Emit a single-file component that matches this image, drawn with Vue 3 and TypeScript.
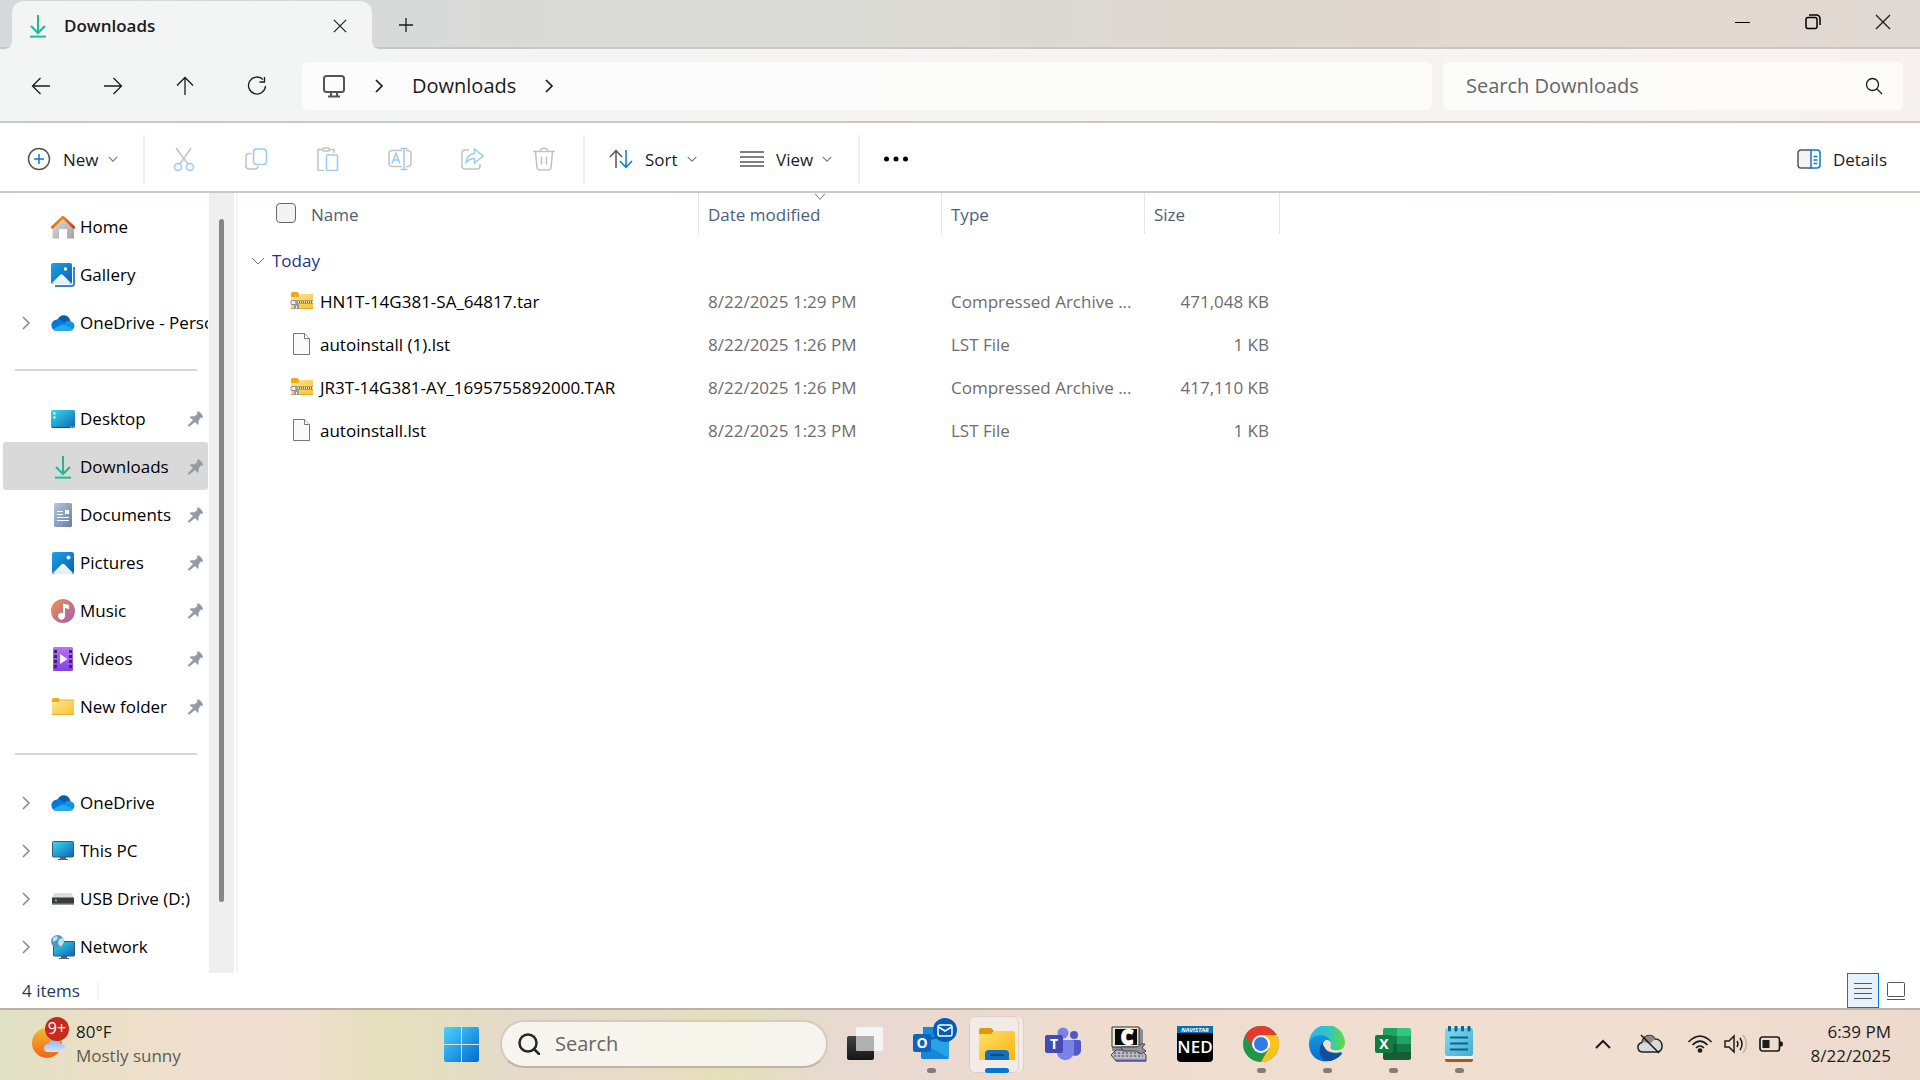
<script setup lang="ts">
import { ref } from 'vue'

interface Place {
  label: string
  icon: string
  expandable?: boolean
  pinned?: boolean
  active?: boolean
}

interface FileRow {
  name: string
  icon: string
  modified: string
  type: string
  size: string
}

const placeGroups: Place[][] = [
  [
    { label: 'Home', icon: 'home' },
    { label: 'Gallery', icon: 'gallery' },
    { label: 'OneDrive - Personal', icon: 'onedrive', expandable: true },
  ],
  [
    { label: 'Desktop', icon: 'desktop', pinned: true },
    { label: 'Downloads', icon: 'download', pinned: true, active: true },
    { label: 'Documents', icon: 'documents', pinned: true },
    { label: 'Pictures', icon: 'pictures', pinned: true },
    { label: 'Music', icon: 'music', pinned: true },
    { label: 'Videos', icon: 'videos', pinned: true },
    { label: 'New folder', icon: 'folder', pinned: true },
  ],
  [
    { label: 'OneDrive', icon: 'onedrive', expandable: true },
    { label: 'This PC', icon: 'pc', expandable: true },
    { label: 'USB Drive (D:)', icon: 'drive', expandable: true },
    { label: 'Network', icon: 'network', expandable: true },
  ],
]

const files: FileRow[] = [
  { name: 'HN1T-14G381-SA_64817.tar', icon: 'archive', modified: '8/22/2025 1:29 PM', type: 'Compressed Archive ...', size: '471,048 KB' },
  { name: 'autoinstall (1).lst', icon: 'file', modified: '8/22/2025 1:26 PM', type: 'LST File', size: '1 KB' },
  { name: 'JR3T-14G381-AY_1695755892000.TAR', icon: 'archive', modified: '8/22/2025 1:26 PM', type: 'Compressed Archive ...', size: '417,110 KB' },
  { name: 'autoinstall.lst', icon: 'file', modified: '8/22/2025 1:23 PM', type: 'LST File', size: '1 KB' },
]

const navButtons = [
  { label: 'Back', icon: 'back' },
  { label: 'Forward', icon: 'forward' },
  { label: 'Up', icon: 'up' },
  { label: 'Refresh', icon: 'refresh' },
]

const editButtons = [
  { label: 'Cut', icon: 'cut' },
  { label: 'Copy', icon: 'copy' },
  { label: 'Paste', icon: 'paste' },
  { label: 'Rename', icon: 'rename' },
  { label: 'Share', icon: 'share' },
  { label: 'Delete', icon: 'trash' },
]

const folderQuery = ref('')
const taskbarQuery = ref('')
const allSelected = ref(false)
</script>

<template>
  <div class="screen">
    <svg class="sprite" width="0" height="0" aria-hidden="true">
      <defs>
        <linearGradient id="g-green" x1="0" y1="0" x2="0" y2="1"><stop offset="0" stop-color="#40d48c" /><stop offset="1" stop-color="#0ca59b" /></linearGradient>
        <linearGradient id="g-roof" x1="0" y1="0" x2="1" y2="1"><stop offset="0" stop-color="#f9a11b" /><stop offset="1" stop-color="#c9380c" /></linearGradient>
        <linearGradient id="g-wall" x1="0" y1="0" x2="1" y2="1"><stop offset="0" stop-color="#dcdcdc" /><stop offset="1" stop-color="#a3a3a3" /></linearGradient>
        <linearGradient id="g-blue" x1="0" y1="0" x2="1" y2="1"><stop offset="0" stop-color="#1ea2e8" /><stop offset="1" stop-color="#0560b4" /></linearGradient>
        <linearGradient id="g-teal" x1="0" y1="0" x2="1" y2="1"><stop offset="0" stop-color="#3bdde6" /><stop offset="1" stop-color="#0a63bd" /></linearGradient>
        <linearGradient id="g-snow" x1="0" y1="0" x2="0" y2="1"><stop offset="0" stop-color="#ffffff" /><stop offset="1" stop-color="#dcecfb" /></linearGradient>
        <linearGradient id="g-doc" x1="0" y1="0" x2="1" y2="1"><stop offset="0" stop-color="#b5c7dc" /><stop offset="1" stop-color="#6080a5" /></linearGradient>
        <linearGradient id="g-music" x1="0" y1="0" x2="1" y2="1"><stop offset="0" stop-color="#f49147" /><stop offset="1" stop-color="#a05fb8" /></linearGradient>
        <linearGradient id="g-video" x1="0" y1="0" x2="0" y2="1"><stop offset="0" stop-color="#b574f2" /><stop offset="1" stop-color="#8242e0" /></linearGradient>
        <linearGradient id="g-folder" x1="0" y1="0" x2="1" y2="1"><stop offset="0" stop-color="#ffe69a" /><stop offset="1" stop-color="#fbc22b" /></linearGradient>
        <linearGradient id="g-start" gradientUnits="userSpaceOnUse" x1="0" y1="0" x2="35" y2="35"><stop offset="0" stop-color="#4fd4ff" /><stop offset="1" stop-color="#006fd0" /></linearGradient>
        <linearGradient id="g-sun" x1="0" y1="0" x2="0" y2="1"><stop offset="0" stop-color="#f2ba34" /><stop offset="1" stop-color="#f26513" /></linearGradient>
        <linearGradient id="g-cloud" x1="0" y1="0" x2="0" y2="1"><stop offset="0" stop-color="#8eb4f2" /><stop offset="1" stop-color="#d8e2fa" /></linearGradient>
        <linearGradient id="g-dark" x1="0" y1="0" x2="0" y2="1"><stop offset="0" stop-color="#434343" /><stop offset="1" stop-color="#151515" /></linearGradient>
        <linearGradient id="g-explorer" x1="0" y1="0" x2="1" y2="1"><stop offset="0" stop-color="#ffe06a" /><stop offset="1" stop-color="#f9b50c" /></linearGradient>
        <linearGradient id="g-edge" x1="0" y1="0" x2="1" y2="0"><stop offset="0" stop-color="#2fb2f0" /><stop offset="0.5" stop-color="#2dc4cc" /><stop offset="1" stop-color="#63dc3c" /></linearGradient>
        <linearGradient id="g-edge-blue" x1="0" y1="0" x2="0" y2="1"><stop offset="0" stop-color="#1795e0" /><stop offset="1" stop-color="#0a6ec8" /></linearGradient>
        <linearGradient id="g-note" x1="0" y1="0" x2="1" y2="1"><stop offset="0" stop-color="#7fdaf3" /><stop offset="1" stop-color="#42acd0" /></linearGradient>
      </defs>

      <symbol id="download" viewBox="0 0 24 24">
        <path d="M12 1v17M5 12l7 7 7-7" fill="none" stroke="#1cb994" stroke-width="2" />
        <rect x="4" y="21.500" width="16" height="2" fill="url(#g-green)" />
      </symbol>
      <symbol id="home" viewBox="0 0 24 24">
        <path d="M12 3 1.500 13v9.500a1 1 0 0 0 1 1H8V14h8v9.500h6a1 1 0 0 0 1-1V13z" fill="url(#g-wall)" />
        <path d="M1 12.500 12 2l11 10.500" fill="none" stroke="url(#g-roof)" stroke-width="2.500" stroke-linecap="round" stroke-linejoin="round" />
      </symbol>
      <symbol id="gallery" viewBox="0 0 24 24">
        <path d="M23 4v16.500a2.500 2.500 0 0 1-2.500 2.500H4" fill="none" stroke="#3c84cf" stroke-width="2" />
        <rect width="21" height="21" rx="2" fill="url(#g-blue)" />
        <path d="M1 20 9 12q1.500-1.500 3 0l8 8q-1 1-2 1H3q-1 0-2-1" fill="url(#g-snow)" />
        <circle cx="14.500" cy="6" r="1.700" fill="#fff" />
      </symbol>
      <symbol id="onedrive" viewBox="0 0 24 24">
        <path d="M6 10C8 3 17 2 19.500 10l-8 4z" fill="#0a5cb2" />
        <path d="M6 8.500c4-1 7 3 9 4.500l-9 6.500H5C-1.500 19 -1 9 6 8.500" fill="#0a78d4" />
        <path d="M13 12c3-3 5.500-2.500 7-1.500 4 1 5 6 1 8.500l-5 .5z" fill="#158fe0" />
        <path d="M2 18.300 11.500 13l11 5.300Q21 20 19 20H5q-2 0-3-1.700" fill="#28a8ee" />
      </symbol>
      <symbol id="desktop" viewBox="0 0 24 24">
        <rect y="3" width="24" height="18" rx="1.500" fill="url(#g-teal)" />
        <path d="M2.500 5.500h2v2h-2zM2.500 9.500h2v2h-2z" fill="#fff" /><path d="M1 20.500h18" stroke="#174d7c" />
        <path d="M19.500 20h1M22 20h1" stroke="#fff" />
      </symbol>
      <symbol id="documents" viewBox="0 0 24 24">
        <rect x="3" width="18" height="24" rx="1.500" fill="url(#g-doc)" />
        <path d="M6 8.500h6M6 11.500h6M6 14.500h12M6 17.500h12" stroke="#fff" stroke-width="1.200" /><path d="M14 7h4v4h-4z" fill="#fff" />
      </symbol>
      <symbol id="pictures" viewBox="0 0 24 24">
        <rect x="1" y="1" width="22" height="22" rx="2" fill="url(#g-blue)" />
        <path d="m2 22 8.500-8.500q1.500-1.500 3 0L22 22q-1 1-2 1H4q-1 0-2-1" fill="url(#g-snow)" />
        <circle cx="17.500" cy="6.500" r="2" fill="#fff" />
      </symbol>
      <symbol id="music" viewBox="0 0 24 24">
        <circle cx="12" cy="12" r="12" fill="url(#g-music)" />
        <path d="M12 4.500 18 6v4l-4-1v8a3.500 3.500 0 1 1-2-3z" fill="#fff" />
      </symbol>
      <symbol id="videos" viewBox="0 0 24 24">
        <rect x="2" width="20" height="24" rx="1.500" fill="url(#g-video)" />
        <path d="M4.500 3v19M19.500 3v19" stroke="#412370" stroke-width="3" stroke-dasharray="3 2" />
        <path d="M9 7v10l7.500-5z" fill="#f5f0fb" />
      </symbol>
      <symbol id="folder" viewBox="0 0 24 24">
        <path d="M1 5V4.500Q1 3 2.500 3h5L9 4.500 8 8H1z" fill="#f3a815" />
        <path d="M1 7h7l2-2h13v14.500H1z" fill="url(#g-folder)" /><path d="M1 19.500h22M9 5h14" stroke="#eab02b" />
      </symbol>
      <symbol id="pc" viewBox="0 0 24 24">
        <path d="M9 17h6v3h2v1H7v-1h2z" fill="#586571" />
        <rect x="1.500" y="2.500" width="21" height="15.500" rx="1" fill="url(#g-teal)" stroke="#3d5970" />
      </symbol>
      <symbol id="drive" viewBox="0 0 24 24">
        <path d="M4.500 6h15q1.500 0 3.500 5H1q2-5 3.500-5" fill="#dadcde" />
        <rect x="1" y="10.500" width="22" height="7" rx=".5" fill="#3b3b3b" /><path d="M1 17h22" stroke="#999" /><path d="M4 12.500h2v2H4z" fill="#2be32b" />
      </symbol>
      <symbol id="network" viewBox="0 0 24 24">
        <path d="M10 21h6v2h2v1H8v-1h2z" fill="#586571" />
        <rect x="2.500" y="6.500" width="21" height="14.500" rx=".5" fill="url(#g-teal)" stroke="#285c86" />
        <circle cx="6.500" cy="6.500" r="6.500" fill="#5096bd" /><path d="M2 3q3-3 5-1L6 5 2 7zM8 4l4-1 1 4-3 5-3-3z" fill="#bfe4ee" />
      </symbol>
      <symbol id="archive" viewBox="0 0 24 24">
        <g transform="translate(0 2)">
          <path d="M1 4V2.500Q1 1 2.500 1h5L9 3v3H1z" fill="#f3a815" />
          <path d="M1 6h7l2-3h13v15H1z" fill="url(#g-folder)" /><path d="M1 17.500h22" stroke="#e1a826" />
          <path d="M8 11h15" stroke="#7d7046" stroke-width="3" /><path d="M8 11h15" stroke="#f0e3a9" stroke-width="2" stroke-dasharray="1 1" />
          <rect x="1" y="9.500" width="5" height="4" rx="1" fill="#eee" stroke="#8e8e8e" /><path d="M5 9h3v4h1v5H4v-4h2z" fill="#9b9b9b" /><path d="M6 15h1v2H6z" fill="#fff" />
        </g>
      </symbol>
      <symbol id="file" viewBox="0 0 24 24">
        <path d="M3.500 1.500h11l5 5v16h-16z" fill="#fafafa" stroke="#777" stroke-linejoin="round" /><path d="M14.500 1.500v5h5" fill="#fff" stroke="#777" />
      </symbol>
      <symbol id="pin" viewBox="0 0 16 16">
        <path d="M9.500.5c1-1 6 4 5.500 5.500-.5 1-1.500.5-2.500.8L10.500 10c.3 2 .2 3-.5 4L7 11 1.500 15.500H0V14l5-5-3.500-3C2.500 5 4 5 6 5.500L9 3.500c.3-1 0-2.300.5-3" fill="#919ca5" />
      </symbol>

      <symbol id="back" viewBox="0 0 20 20"><path d="M19 10H1.500M9.500 2l-8 8 8 8" /></symbol>
      <symbol id="forward" viewBox="0 0 20 20"><path d="M1 10h17.500M10.500 2l8 8-8 8" /></symbol>
      <symbol id="up" viewBox="0 0 20 20"><path d="M10 19V1.500M2 9.500l8-8 8 8" /></symbol>
      <symbol id="refresh" viewBox="0 0 20 20"><path d="M16 3.500A8.500 8.500 0 1 0 18.500 10M17.500 1v5h-5" /></symbol>
      <symbol id="chevron-right" viewBox="0 0 10 14"><path d="m2 1 6 6-6 6" /></symbol>
      <symbol id="chevron-down" viewBox="0 0 14 10"><path d="m1 2 6 6 6-6" /></symbol>
      <symbol id="close" viewBox="0 0 16 16"><path d="m1 1 14 14M15 1 1 15" /></symbol>
      <symbol id="plus" viewBox="0 0 16 16"><path d="M8 1v14M1 8h14" /></symbol>
      <symbol id="search" viewBox="0 0 18 18"><circle cx="7.500" cy="7.500" r="6" /><path d="m12 12 5 5" /></symbol>
      <symbol id="lines" viewBox="0 0 24 18"><path d="M0 2h24M0 7h24M0 12h24M0 16h24" /></symbol>

      <symbol id="cut" viewBox="0 0 24 24"><path d="M4 1 16 17M19 1 8 17" stroke="#c2c2c2" /><g stroke="#9ccbf0"><circle cx="6" cy="20" r="3.500" /><circle cx="18" cy="20" r="3.500" /></g></symbol>
      <symbol id="copy" viewBox="0 0 24 24"><path d="M7.500 6.500H5a3 3 0 0 0-3 3V19a3 3 0 0 0 3 3h6q3 0 3-3" stroke="#c2c2c2" /><rect x="9.500" y="2" width="13" height="15.500" rx="3" stroke="#9ccbf0" /></symbol>
      <symbol id="paste" viewBox="0 0 24 24"><path d="M7 2.500H2v21h6M13 2.500h5V6" stroke="#c2c2c2" /><rect x="6.500" y="1" width="7" height="3" rx="1.500" stroke="#c2c2c2" /><rect x="10.500" y="8" width="11" height="15.500" rx="1.500" stroke="#9ccbf0" /></symbol>
      <symbol id="rename" viewBox="0 0 24 24"><path d="M14 3.500H4a3 3 0 0 0-3 3v10a3 3 0 0 0 3 3h10M18 3.500h2a3 3 0 0 1 3 3v10a3 3 0 0 1-3 3h-2" stroke="#c2c2c2" /><path d="M16 1.500v21M12.500 1.500h7M12.500 22.500h7M4 16.500l4-10 4 10M5.500 13h5" stroke="#9ccbf0" /></symbol>
      <symbol id="share" viewBox="0 0 24 24"><path d="M9 3H5a3 3 0 0 0-3 3v13a3 3 0 0 0 3 3h12a3 3 0 0 0 3-3v-2" stroke="#c2c2c2" /><path d="M14.500 2v4.500C9 7 6.500 10 6 15.500c2.500-3 5-4 8.500-4V16l8.500-7z" stroke="#9ccbf0" /></symbol>
      <symbol id="trash" viewBox="0 0 24 24"><path d="M1 4.500h22M8 4.500C8 0 16 0 16 4.500M3.500 4.500l1.500 16q.3 2.500 3 2.500h8q2.700 0 3-2.500l1.500-16M9.500 9.500v8M14.500 9.500v8" stroke="#c2c2c2" /></symbol>
    </svg>

    <header class="titlebar">
      <div class="tab">
        <svg width="24" height="24"><use href="#download" /></svg>
        <span class="tab-title">Downloads</span>
        <button class="tab-close" aria-label="Close tab"><svg class="line" width="14" height="14"><use href="#close" /></svg></button>
      </div>
      <button class="tab-new" aria-label="New tab"><svg class="line" width="16" height="16"><use href="#plus" /></svg></button>
      <div class="window-controls">
        <button aria-label="Minimize"><svg width="16" height="16" viewBox="0 0 16 16"><path d="M0 8.500h15" stroke="#000" /></svg></button>
        <button aria-label="Restore">
          <svg width="16" height="16" viewBox="0 0 16 16" fill="none" stroke="#000" stroke-width="1.500"><rect x="1" y="3.500" width="11" height="11" rx="2" /><path d="M4 1h7.500A3.500 3.500 0 0 1 15 4.500V11" /></svg>
        </button>
        <button aria-label="Close"><svg class="line" width="16" height="16"><use href="#close" /></svg></button>
      </div>
    </header>

    <nav class="navbar" aria-label="Navigation">
      <button v-for="b in navButtons" :key="b.icon" class="nav-button" :aria-label="b.label">
        <svg class="line" width="20" height="20"><use :href="'#' + b.icon" /></svg>
      </button>
      <div class="address">
        <svg class="monitor" width="24" height="24" viewBox="0 0 24 24" fill="none" stroke="#555" stroke-width="2"><rect x="2" y="2" width="20" height="16" rx="2.500" /><path d="M9 18v4M15 18v4M6 22.500h12" /></svg>
        <svg class="crumb-arrow" width="10" height="14"><use href="#chevron-right" /></svg>
        <a class="crumb" href="#">Downloads</a>
        <svg class="crumb-arrow" width="10" height="14"><use href="#chevron-right" /></svg>
      </div>
      <label class="folder-search">
        <input v-model="folderQuery" type="text" placeholder="Search Downloads" aria-label="Search Downloads" />
        <svg class="line" width="18" height="18"><use href="#search" /></svg>
      </label>
    </nav>

    <div class="commandbar">
      <button class="command command-new">
        <svg width="24" height="24" viewBox="0 0 24 24" fill="none"><circle cx="12" cy="12" r="10.500" stroke="#555" stroke-width="1.500" /><path d="M12 7v10M7 12h10" stroke="#0b78d0" stroke-width="1.500" /></svg>
        <span>New</span>
        <svg class="caret"><use href="#chevron-down" /></svg>
      </button>
      <span class="divider"></span>
      <div class="edit-group">
        <button v-for="b in editButtons" :key="b.icon" class="edit-button" :aria-label="b.label" disabled>
          <svg width="24" height="24"><use :href="'#' + b.icon" /></svg>
        </button>
      </div>
      <span class="divider"></span>
      <button class="command command-sort">
        <svg width="24" height="20" viewBox="0 0 24 20" fill="none" stroke-width="1.500"><path d="M7 19V1.500M1 8l6-6.500L13 8" stroke="#555" /><path d="M17 1v17.500M11 12l6 6.500 6-6.500" stroke="#0b78d0" /></svg>
        <span>Sort</span>
        <svg class="caret"><use href="#chevron-down" /></svg>
      </button>
      <button class="command command-view">
        <svg class="line gray" width="24" height="18"><use href="#lines" /></svg>
        <span>View</span>
        <svg class="caret"><use href="#chevron-down" /></svg>
      </button>
      <span class="divider"></span>
      <button class="more" aria-label="See more"><svg width="26" height="6" viewBox="0 0 26 6"><circle cx="3.500" cy="3" r="2.500" /><circle cx="13" cy="3" r="2.500" /><circle cx="22.500" cy="3" r="2.500" /></svg></button>
      <button class="command command-details">
        <svg width="24" height="20" viewBox="0 0 24 20" fill="none" stroke-width="1.500"><path d="M14 1H4a3 3 0 0 0-3 3v12a3 3 0 0 0 3 3h10" fill="#f4f4f4" stroke="#555" /><path d="M14 1h6a3 3 0 0 1 3 3v12a3 3 0 0 1-3 3h-6zM16.500 7.500h4M16.500 11h4M16.500 14.500h4" stroke="#0b78d0" /></svg>
        <span>Details</span>
      </button>
    </div>

    <main class="body">
      <aside class="sidebar">
        <div v-for="(group, gi) in placeGroups" :key="gi" class="place-group">
          <a v-for="p in group" :key="p.label" href="#" class="place" :class="{ active: p.active }">
            <span class="place-toggle"><svg v-if="p.expandable" class="tree-arrow" width="10" height="14"><use href="#chevron-right" /></svg></span>
            <svg class="place-icon" width="24" height="24"><use :href="'#' + p.icon" /></svg>
            <span class="place-label">{{ p.label }}</span>
            <svg v-if="p.pinned" class="place-pin" width="16" height="16"><use href="#pin" /></svg>
          </a>
        </div>
      </aside>
      <div class="scrollbar"><div class="thumb"></div></div>

      <section class="files">
        <table>
          <colgroup><col class="col-name" /><col class="col-date" /><col class="col-type" /><col class="col-size" /></colgroup>
          <thead>
            <tr>
              <th scope="col">
                <div class="head head-name">
                  <input id="select-all" v-model="allSelected" type="checkbox" aria-label="Select all items" />
                  <label for="select-all">Name</label>
                </div>
              </th>
              <th scope="col">
                <div class="head">Date modified<svg class="sort-mark" width="14" height="8" viewBox="0 0 14 10"><path d="m1 1 6 7 6-7" /></svg></div>
              </th>
              <th scope="col"><div class="head">Type</div></th>
              <th scope="col"><div class="head">Size</div></th>
            </tr>
          </thead>
          <tbody>
            <tr class="group-row">
              <th colspan="4" scope="colgroup">
                <button class="group"><svg width="14" height="10"><use href="#chevron-down" /></svg>Today</button>
              </th>
            </tr>
            <tr v-for="f in files" :key="f.name" class="file-row">
              <td><div class="file-name"><svg width="24" height="24"><use :href="'#' + f.icon" /></svg>{{ f.name }}</div></td>
              <td class="meta">{{ f.modified }}</td>
              <td class="meta">{{ f.type }}</td>
              <td class="meta size">{{ f.size }}</td>
            </tr>
          </tbody>
        </table>
      </section>
    </main>

    <footer class="statusbar">
      <span class="count">4 items</span>
      <div class="view-modes">
        <button class="mode selected" aria-label="Details view"><svg width="18" height="18" viewBox="0 0 18 18" stroke="#555"><path d="M0 1.500h18M0 6.500h18M0 11.500h18M0 16.500h18" /></svg></button>
        <button class="mode" aria-label="Large icons view"><svg width="18" height="18" viewBox="0 0 18 18" fill="none" stroke="#555"><rect x=".5" y=".5" width="17" height="14" rx="1" /><path d="M0 17.500h18" /></svg></button>
      </div>
    </footer>

    <div class="taskbar">
      <button class="weather">
        <svg width="38" height="42" viewBox="0 0 38 42">
          <circle cx="15" cy="26" r="15" fill="url(#g-sun)" />
          <path d="M16 35q-4 0-4-4t5-4q1-5 6-4 4 0 5 4 5 0 5 4 0 4-4 4z" fill="url(#g-cloud)" />
          <circle cx="25" cy="12" r="12" fill="#c42b1c" />
          <text x="25" y="17" text-anchor="middle" font-size="16" fill="#fff">9+</text>
        </svg>
        <span class="weather-text"><span>80°F</span><span class="muted">Mostly sunny</span></span>
      </button>

      <div class="dock">
        <button class="slot" aria-label="Start">
          <svg width="36" height="36" viewBox="0 0 36 36" fill="url(#g-start)"><path d="M3 1h15v17H1V3q0-2 2-2M19 1h15q2 0 2 2v15H19zM1 19h17v17H3q-2 0-2-2zM19 19h17v15q0 2-2 2H19z" /></svg>
        </button>
        <label class="task-search">
          <svg width="22" height="22" viewBox="0 0 22 22" fill="none" stroke="#262626" stroke-width="2.500" stroke-linecap="round"><circle cx="10" cy="10" r="8.500" /><path d="m16 16 5 5" /></svg>
          <input v-model="taskbarQuery" type="text" placeholder="Search" aria-label="Search" />
        </label>
        <button class="slot" aria-label="Task view">
          <svg width="36" height="36" viewBox="0 0 36 36"><rect y="10" width="27" height="24" rx="2" fill="url(#g-dark)" /><rect x="9" y="1" width="27" height="24" rx="2" fill="#f5f5f5" /><path d="M9 10h18v15H11q-2 0-2-2z" fill="#b1b1b1" /></svg>
        </button>
        <button class="slot running" aria-label="Outlook">
          <svg class="badged" width="36" height="36" viewBox="0 8 36 36">
            <path d="M10 9h25v20H10z" fill="#0d65b5" /><path d="M10 9h12v10H10z" fill="#1689da" /><path d="M8 24l28-6v21q0 2-2 2H10q-2 0-2-2z" fill="#29a3e6" /><path d="m8 24 28 16q-1 1-2 1H10q-2 0-2-2z" fill="#1787d8" />
            <rect y="16" width="18" height="18" rx="2" fill="#0b64bd" /><text x="9" y="30" text-anchor="middle" font-size="14" font-weight="700" fill="#fff">O</text>
            <circle cx="32" cy="12" r="12" fill="#005fb8" /><rect x="25" y="7" width="14" height="11" rx="2" fill="none" stroke="#fff" stroke-width="1.500" /><path d="m25.500 9 6.500 4 6.500-4" fill="none" stroke="#fff" stroke-width="1.500" />
          </svg>
        </button>
        <button class="slot current" aria-label="File Explorer">
          <svg width="36" height="34" viewBox="0 0 36 34">
            <path d="M0 3q0-2 2-2h10l3 3-3 5H0z" fill="#dc9a06" /><path d="M0 7h12l3-3h19q2 0 2 2v27H0z" fill="url(#g-explorer)" />
            <path d="M6 33v-6q0-4 4-4h16q4 0 4 4v6z" fill="#116fbe" /><path d="M11 28h14" stroke="#0b4d91" stroke-width="2" />
          </svg>
        </button>
        <button class="slot" aria-label="Teams">
          <svg width="36" height="36" viewBox="0 0 36 36">
            <circle cx="29" cy="9" r="4" fill="#5059c9" /><circle cx="18" cy="7" r="5.500" fill="#7b83eb" /><path d="M24 14h10q2 0 2 2v8c0 5-5 7-9 5z" fill="#5059c9" /><path d="M12 14h15q2 0 2 2v9c0 12-17 12-17 1z" fill="#7b83eb" />
            <rect y="9" width="18" height="18" rx="2" fill="#444bb0" /><text x="9" y="23" text-anchor="middle" font-size="14" font-weight="700" fill="#fff">T</text>
          </svg>
        </button>
        <button class="slot" aria-label="Cummins">
          <svg width="36" height="36" viewBox="0 0 36 36">
            <path d="M1 1h27l4 3v18l-4 3H1z" fill="#8c8c94" /><path d="M1 1h27v20H1z" fill="#e6e6d4" stroke="#333" /><path d="M4 3h22v16H4z" fill="#080808" />
            <text x="16" y="18" text-anchor="middle" font-size="19" font-weight="700" fill="#fff" stroke="#fff" stroke-width="2">C</text>
            <path d="M5 24h25l5 5v6H5l-5-6z" fill="#b9b9c5" stroke="#444" /><path d="M3 27h27M3 30h29" stroke="#444" stroke-dasharray="2 2" /><path d="M5 34.500h30" stroke="#5b599e" stroke-width="2" />
            <path d="M10 21h16l4-3h4l-3 4 4 3-5 3-5-3H12z" fill="#92929a" stroke="#444" />
          </svg>
        </button>
        <button class="slot" aria-label="Navistar NED">
          <svg width="36" height="36" viewBox="0 0 36 36">
            <path d="M0 0h36v32q0 4-4 4H4q-4 0-4-4z" /><path d="M0 0h36v7H0z" fill="#0870b5" />
            <text x="18" y="6" text-anchor="middle" font-size="6" font-weight="700" font-style="italic" fill="#fff">NAVISTAR</text>
            <text x="18" y="27" text-anchor="middle" font-size="17" font-weight="600" fill="#fff">NED</text>
          </svg>
        </button>
        <button class="slot running" aria-label="Chrome">
          <svg width="36" height="36" viewBox="0 0 36 36">
            <circle cx="18" cy="18" r="18" fill="#249447" /><path d="M18 9h15.600A18 18 0 0 1 18 36l7.800-13.500z" fill="#fcc31e" /><path d="M2.400 9A18 18 0 0 1 33.600 9H18l-7.800 13.500z" fill="#e53b2e" />
            <circle cx="18" cy="18" r="9" fill="#fff" /><circle cx="18" cy="18" r="7" fill="#2f7bee" />
          </svg>
        </button>
        <button class="slot running" aria-label="Edge">
          <svg width="36" height="36" viewBox="0 0 36 36">
            <path d="M0 18A18 18 0 0 1 36 16c0 8-6 9-11 8-4-1-4-2-3-4l-7-8z" fill="url(#g-edge)" />
            <path d="M0 18C1 7 20 6 22 17c-3-4-8-3-8 1 0 8 10 10 19 8C24 41 0 38 0 18" fill="url(#g-edge-blue)" />
            <path d="M16 14c-10 8-5 22 5 21 6-1 11-5 12-8-1-1-5 1-9 0-7-1-11-7-8-13" fill="#124f9b" />
            <path d="M14 17c1-4 8-4 8 1-1 3-2 4 0 5-5 0-8-2-8-6" fill="#f0dfd1" />
          </svg>
        </button>
        <button class="slot running" aria-label="Excel">
          <svg width="36" height="34" viewBox="0 0 36 34">
            <path d="M10 1h12v8H8V3q0-2 2-2" fill="#21a366" /><path d="M22 1h12q2 0 2 2v6H22z" fill="#33c481" /><path d="M8 9h14v8H8z" fill="#107c41" /><path d="M22 9h14v8H22z" fill="#21a366" /><path d="M8 17h14v16H10q-2 0-2-2z" fill="#185c37" /><path d="M22 17h14v8H22z" fill="#107c41" /><path d="M22 25h14v6q0 2-2 2H22z" fill="#185c37" />
            <rect y="8" width="18" height="18" rx="2" fill="#107c41" /><text x="9" y="22" text-anchor="middle" font-size="14" font-weight="700" fill="#fff">X</text>
          </svg>
        </button>
        <button class="slot running" aria-label="Notepad">
          <svg width="28" height="36" viewBox="0 0 28 36">
            <path d="M0 31h28v3q0 2-2 2H2q-2 0-2-2z" fill="#b45412" /><path d="M0 29h28v4H0z" fill="#f2f2f2" /><rect y="2" width="28" height="28" rx="2" fill="url(#g-note)" />
            <path d="M5 11.500h18M5 17.500h18M5 23.500h18" stroke="#086684" stroke-width="2" /><path d="M4.500 1v3M11 1v3M17.500 1v3M24 1v3" stroke="#086684" stroke-width="3" stroke-linecap="round" />
          </svg>
        </button>
      </div>

      <div class="tray">
        <button class="tray-more" aria-label="Show hidden icons"><svg width="16" height="10" viewBox="0 0 16 10" fill="none" stroke="#1c1c1c" stroke-width="2"><path d="m1 9 7-7 7 7" /></svg></button>
        <button class="tray-cloud" aria-label="OneDrive not signed in">
          <svg width="26" height="20" viewBox="0 0 26 20"><path d="M6 18C0 18-1 10 5 8.500 6 1 15-1 18 5c9 0 9 13 2 13z" fill="#d9d9d9" stroke="#222" stroke-width="1.500" /><path d="M5 8C8 0 16 0 18 5l-4 4z" fill="#8a8a8a" /><path d="m4 1 18 18" stroke="#111" stroke-width="1.500" /></svg>
        </button>
        <button class="tray-status" aria-label="Network, volume and battery">
          <svg width="26" height="20" viewBox="0 0 26 20" fill="none" stroke="#1c1c1c" stroke-width="1.700"><path d="M1.500 8Q13-3.500 24.500 8M5.500 11Q13 3.500 20.500 11M9 14q4-4 8 0" /><circle cx="13" cy="16.500" r="1.500" fill="#1c1c1c" /></svg>
          <svg width="24" height="20" viewBox="0 0 24 20" fill="none" stroke="#1c1c1c" stroke-width="1.500"><path d="M1 7v6h4l5 5V2L5 7zM13 7q2 3 0 6M16 4q4 6 0 12" /><path d="M19 1q7 9 0 18" stroke="#c2b4a7" /></svg>
          <svg width="24" height="16" viewBox="0 0 24 16"><rect x="1" y="1" width="19.500" height="14" rx="2.500" fill="none" stroke="#1c1c1c" stroke-width="1.700" /><path d="M3.500 4h7v8h-7zM21 5.500h1.500Q24 5.500 24 8t-1.500 2.500H21z" fill="#1c1c1c" /></svg>
        </button>
        <button class="clock"><span>6:39 PM</span><span>8/22/2025</span></button>
      </div>
    </div>
  </div>
</template>

<style>
body {
  margin: 0;
}
</style>

<style scoped>
.screen {
  display: flex;
  flex-direction: column;
  min-height: 100vh;
  background: #fff;
  color: #1b1b1b;
  font-family: 'Open Sans', 'Noto Sans', sans-serif;
  font-size: 17px;
  line-height: 24px;
}

.screen * {
  box-sizing: border-box;
}

.sprite {
  position: absolute;
}

svg {
  flex: none;
  display: block;
}

button {
  display: flex;
  align-items: center;
  justify-content: center;
  padding: 0;
  border: 0;
  background: none;
  color: inherit;
  font: inherit;
}

a {
  color: inherit;
  text-decoration: none;
}

input {
  min-width: 0;
  padding: 0;
  border: 0;
  outline: 0;
  background: none;
  color: inherit;
  font: inherit;
}

.line {
  fill: none;
  stroke: #1b1b1b;
  stroke-width: 1.3;
}

.gray {
  stroke: #555;
}

/* Title bar */
.titlebar {
  display: flex;
  height: 49px;
  padding-left: 12px;
  border-bottom: 2px solid rgba(170, 165, 155, 0.35);
  background: linear-gradient(90deg, #d4d9dc, #dadad8 30%, #dbdad5 50%, #dfd8d1 64%, #e3d8cf 90%, #e0d8d5);
}

.tab {
  position: relative;
  display: flex;
  align-items: center;
  width: 360px;
  margin: 1px 0 -2px;
  padding: 1px 14px 0;
  border-radius: 12px 12px 0 0;
  background: linear-gradient(90deg, #f2f5f4, #f4f4f4);
}

.tab::before,
.tab::after {
  position: absolute;
  bottom: 0;
  width: 6px;
  height: 6px;
  content: '';
}

.tab::before {
  right: 100%;
  background: radial-gradient(circle at 0 0, transparent 5px, #f2f5f4 6px);
}

.tab::after {
  left: 100%;
  background: radial-gradient(circle at 100% 0, transparent 5px, #f4f4f4 6px);
}

.tab-title {
  flex: 1;
  padding-left: 14px;
  font-weight: 600;
}

.tab-close {
  width: 36px;
  height: 36px;
}

.tab-new {
  width: 68px;
  padding-top: 2px;
}

.window-controls {
  display: flex;
  height: 43px;
  margin-left: auto;
  padding-right: 2px;
}

.window-controls button {
  width: 70px;
}

/* Navigation row */
.navbar {
  display: flex;
  align-items: center;
  height: 74px;
  padding: 2px 17px 0 5px;
  border-bottom: 2px solid;
  border-image: linear-gradient(90deg, #c6c9c9, #cac6c2 50%, #d5c6bb) 1;
  background: linear-gradient(90deg, #f2f5f4, #f4f4f4 30%, #f5f4f1 60%, #f7f2ef);
}

.nav-button {
  width: 72px;
  height: 48px;
}

.address {
  display: flex;
  flex: 1;
  align-items: center;
  height: 48px;
  margin: 0 11px 0 9px;
  padding-left: 20px;
  border-radius: 6px;
  background: rgba(255, 255, 255, 0.7);
  font-size: 20px;
}

.crumb-arrow {
  margin: 0 28px;
  fill: none;
  stroke: #1b1b1b;
  stroke-width: 1.7;
}

.folder-search {
  display: flex;
  align-items: center;
  width: 460px;
  height: 48px;
  padding: 0 20px 0 23px;
  border-radius: 6px;
  background: rgba(255, 255, 255, 0.7);
  font-size: 20px;
}

.folder-search input {
  flex: 1;
}

input::placeholder {
  color: #666;
  opacity: 1;
}

/* Command row */
.commandbar {
  display: flex;
  align-items: center;
  height: 70px;
  padding-top: 3px;
  border-bottom: 2px solid;
  border-image: linear-gradient(90deg, #c4cac8, #cac8c2 50%, #d5c6bb) 1;
}

.command {
  justify-content: flex-start;
  height: 48px;
}

.command span {
  margin: 0 9px 0 12px;
  padding-top: 2px;
}

.caret {
  width: 10px;
  height: 8px;
  fill: none;
  stroke: #777;
  stroke-width: 1.5;
}

.divider {
  width: 2px;
  height: 48px;
  background: #efefef;
}

.command-new {
  width: 143px;
  padding-left: 27px;
}

.edit-group {
  display: flex;
  padding: 0 3px;
}

.edit-button {
  width: 72px;
  height: 48px;
  fill: none;
  stroke-width: 1.5;
}

.command-sort {
  width: 131px;
  padding-left: 24px;
}

.command-view {
  width: 142px;
  padding-left: 24px;
}

.more {
  width: 72px;
  height: 48px;
}

.command-details {
  margin-left: auto;
  padding-right: 24px;
}

/* Folder tree */
.body {
  display: flex;
  flex: 1;
}

.sidebar {
  width: 209px;
  padding-top: 9px;
  color: #000;
}

.place-group + .place-group::before {
  display: block;
  height: 2px;
  margin: 23px 12px 23px 15px;
  background: #d6d6d6;
  content: '';
}

.place {
  display: flex;
  align-items: center;
  height: 48px;
  margin: 0 1px 0 3px;
  padding-top: 2px;
  border-radius: 3px;
}

.place.active {
  background: #d9d9d9;
}

.place-toggle {
  display: flex;
  justify-content: center;
  width: 46px;
  margin-right: 2px;
}

.tree-arrow {
  fill: none;
  stroke: #8a8a8a;
  stroke-width: 1.5;
}

.place-label {
  flex: 1;
  margin-left: 5px;
  overflow: hidden;
  white-space: nowrap;
}

.place-pin {
  margin-right: 4px;
}

.scrollbar {
  width: 25px;
  padding: 26px 10px 71px;
  background: #efefef;
}

.thumb {
  height: 100%;
  border-radius: 3px;
  background: #868686;
}

/* File list */
.files {
  flex: 1;
  margin-left: 2px;
  border-left: 2px solid #f5f5f5;
}

table {
  width: 1042px;
  border-collapse: collapse;
  table-layout: fixed;
}

.col-name {
  width: 461px;
}

.col-date {
  width: 243px;
}

.col-type {
  width: 203px;
}

.col-size {
  width: 135px;
}

th,
td {
  padding: 0;
  font-weight: 400;
  text-align: left;
}

thead tr {
  height: 47px;
  vertical-align: top;
}

.head {
  position: relative;
  display: flex;
  align-items: center;
  height: 41px;
  padding: 2px 0 0 9px;
  border-right: 1px solid #e5e5e5;
  color: #4c607a;
}

.head-name {
  gap: 15px;
  padding-left: 38px;
}

.head-name input {
  width: 20px;
  height: 20px;
  margin: 0 0 3px;
  border: 1px solid #666;
  border-radius: 4px;
  appearance: none;
  background: #f3f3f3;
}

.sort-mark {
  position: absolute;
  top: 0;
  left: 50%;
  margin-left: -7px;
  fill: none;
  stroke: #555;
}

.group-row {
  height: 40px;
}

.group {
  gap: 7px;
  margin-left: 13px;
  padding-top: 1px;
  color: #1f3287;
}

.group svg {
  fill: none;
  stroke: #777;
}

.file-row {
  height: 43px;
}

.file-name {
  display: flex;
  align-items: center;
  gap: 6px;
  padding-left: 52px;
  color: #000;
}

.file-name svg {
  margin-bottom: 2px;
}

.meta {
  padding: 0 12px 0 9px;
  overflow: hidden;
  color: #6d6d6d;
  text-overflow: ellipsis;
  white-space: nowrap;
}

.size {
  padding-right: 11px;
  text-align: right;
}

/* Status row */
.statusbar {
  display: flex;
  align-items: center;
  justify-content: space-between;
  height: 35px;
  padding: 0 7px 0 22px;
  color: #213a66;
}

.count {
  padding-right: 17px;
  border-right: 2px solid #f5f5f5;
  line-height: 18px;
}

.view-modes {
  display: flex;
  height: 35px;
}

.mode {
  width: 34px;
}

.mode.selected {
  width: 32px;
  border: 1px solid #0078d4;
  background: #e5f2fb;
}

/* Taskbar */
.taskbar {
  display: grid;
  grid-template-columns: 1fr auto 1fr;
  height: 72px;
  padding-bottom: 2px;
  border-top: 2px solid #bdb1a7;
  background: linear-gradient(90deg, #dfe1c5, #ebdfc5 5%, #f0dfd0 10%, #f0dfd0 15%, #e5dfbd 20%, #e3dec0 23%, #e5dacc 27%, #e8dbc8 33%, #e6deba 37%, #e3dfba 38%, #e7dad0 43%, #ead9d1 47%, #eedccf 57%, #efded0 66%, #f0dfd0 85%, #ecdacf);
}

.weather {
  justify-self: start;
  gap: 6px;
  padding-left: 32px;
}

.weather svg {
  margin-top: -12px;
}

.weather-text {
  display: flex;
  flex-direction: column;
  text-align: left;
}

.muted {
  color: #5f5b55;
}

.dock {
  display: flex;
  align-items: center;
}

.slot {
  position: relative;
  width: 66px;
  height: 68px;
}

.running::after,
.current::after {
  position: absolute;
  bottom: 5px;
  left: 50%;
  width: 9px;
  height: 5px;
  margin-left: -4px;
  border-radius: 3px;
  background: #857c75;
  content: '';
}

.current::after {
  width: 24px;
  margin-left: -12px;
  background: #0078d4;
}

.current::before {
  position: absolute;
  inset: 6px 11px 5px 5px;
  border: 1px solid #ddcfc7;
  border-radius: 6px;
  background: #f5ebe6;
  box-shadow: 5px 0 0 -1px #f5ebe6, 6px 0 0 -1px #ddcfc7;
  content: '';
}

.current svg {
  position: relative;
}

.badged {
  overflow: visible;
}

.task-search {
  display: flex;
  align-items: center;
  width: 328px;
  height: 48px;
  margin: 0 4px 0 6px;
  padding: 0 16px;
  border: 2px solid #d5cbb8;
  border-bottom-color: #bfb5a4;
  border-radius: 24px;
  background: linear-gradient(90deg, #f8f4ef, #f6f5ea 65%, #f6f4f0);
  font-size: 20px;
}

.task-search input {
  flex: 1;
  margin-left: 15px;
}

.tray {
  display: flex;
  align-items: center;
  justify-self: end;
  padding-right: 29px;
}

.tray-more {
  width: 38px;
}

.tray-cloud {
  width: 56px;
}

.tray-status {
  gap: 11px;
  width: 114px;
}

.clock {
  flex-direction: column;
  align-items: flex-end;
  width: 99px;
}
</style>
